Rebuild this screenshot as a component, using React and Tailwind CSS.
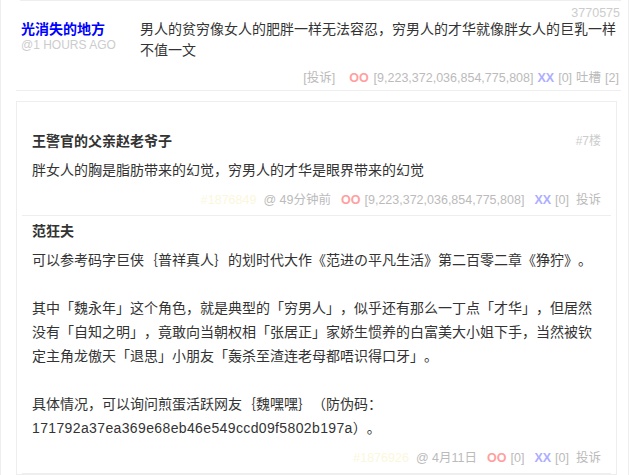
import React from 'react';

const Reply = ({ name, floor, children, id, time, oo, xx }) => (
  <div className="mx-[5px] border-b border-[#eee] px-[10px] pt-[5px] pb-[7px]">
    <div className="flex justify-between leading-[20px]">
      <span className="text-[14px] font-bold text-[#333]">{name}</span>
      <span className="text-[12px] text-[#ccc]">{floor}</span>
    </div>
    <div className="mt-[7px] text-[14px] leading-[24px] text-[#333]">{children}</div>
    <div className="mt-[10px] flex justify-end text-[12.5px] leading-[16px] text-[#bbb]">
      <span className="text-[#fbf7dc]">{id}</span>
      <span className="ml-[7px]">@ {time}</span>
      <span className="ml-[10px] font-bold text-[#ff9f9f]">OO</span>
      <span className="ml-[4px]">[{oo}]</span>
      <span className="ml-[10px] font-bold text-[#aeaeff]">XX</span>
      <span className="ml-[4px]">[{xx}]</span>
      <span className="ml-[7px]">投诉</span>
    </div>
  </div>
);

export default function App() {
  return (
    <div
      className="min-h-[475px] w-[629px] border-x border-[#eee] bg-white pl-[15px] pr-[7px] [text-spacing-trim:space-all]"
      style={{ fontFamily: '"Liberation Sans", "Noto Sans CJK SC", sans-serif' }}
    >
      {/* top post */}
      <div className="ml-[4px] h-px bg-[#eee]" />
      <div className="border-b border-[#eee] pb-[4px]">
        <div className="pt-[6px] pr-px text-right text-[12.5px] leading-[12px] text-[#ccc]">3770575</div>
        <div className="flex">
          <div className="w-[124px] shrink-0 pl-[5px]">
            <div className="text-[14px] font-bold leading-[20px] text-[#0000ff]">光消失的地方</div>
            <div className="text-[12px] leading-[12px] text-[#ccc]">@1 HOURS AGO</div>
          </div>
          <div className="flex-1 pr-px text-[14px] leading-[21px] text-[#333]">
            男人的贫穷像女人的肥胖一样无法容忍，穷男人的才华就像胖女人的巨乳一样不值一文
          </div>
        </div>
        <div className="mt-[9px] flex justify-end pr-[2px] text-[12.5px] leading-[16px] text-[#bbb]">
          <span>[投诉]</span>
          <span className="ml-[14px] font-bold text-[#ff9f9f]">OO</span>
          <span className="ml-[5px]">[9,223,372,036,854,775,808]</span>
          <span className="ml-[4px] font-bold text-[#aeaeff]">XX</span>
          <span className="ml-[4px]">[0]</span>
          <span className="ml-[4px]">吐槽</span>
          <span className="ml-[4px]">[2]</span>
        </div>
      </div>

      {/* replies */}
      <div className="mt-[10px] mr-[4px] border border-[#eee] pt-[24px]">
        <Reply
          name="王警官的父亲赵老爷子"
          floor="#7楼"
          id="#1876849"
          time="49分钟前"
          oo="9,223,372,036,854,775,808"
          xx="0"
        >
          胖女人的胸是脂肪带来的幻觉，穷男人的才华是眼界带来的幻觉
        </Reply>
        <Reply name="范狂夫" floor="" id="#1876926" time="4月11日" oo="0" xx="0">
          <p>可以参考码字巨侠｛普祥真人｝的划时代大作《范进の平凡生活》第二百零二章《狰狞》。</p>
          <p className="mt-[24px]">
            其中「魏永年」这个角色，就是典型的「穷男人」，似乎还有那么一丁点「才华」，但居然没有「自知之明」，竟敢向当朝权相「张居正」家娇生惯养的白富美大小姐下手，当然被钦定主角龙傲天「退思」小朋友「轰杀至渣连老母都唔识得口牙」。
          </p>
          <p className="mt-[24px]">
            具体情况，可以询问煎蛋活跃网友｛魏嘿嘿｝（防伪码：
            <span className="tracking-[0.37px]">171792a37ea369e68eb46e549ccd09f5802b197a</span>）。
          </p>
        </Reply>
      </div>
    </div>
  );
}
